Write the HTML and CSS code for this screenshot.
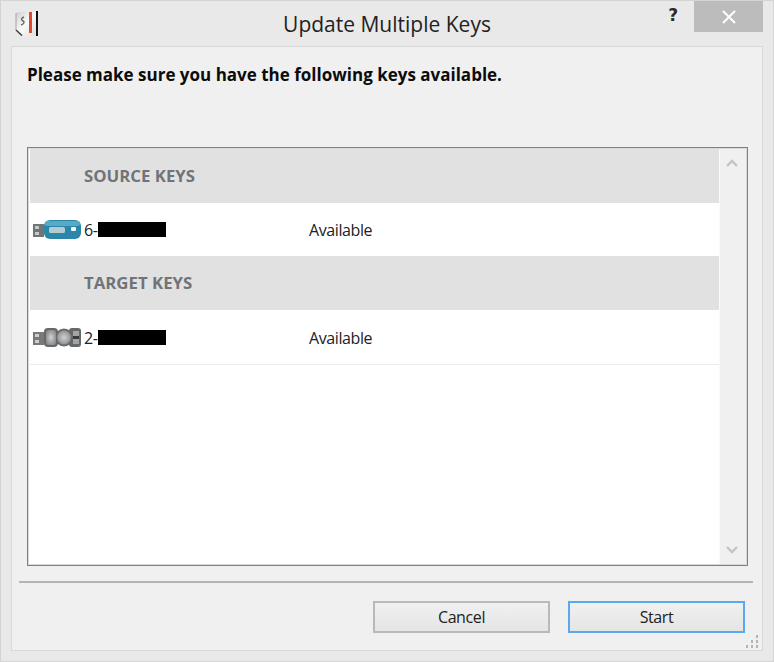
FILE: index.html
```html
<!DOCTYPE html>
<html lang="en">
<head>
  <meta charset="UTF-8">
  <title>Update Multiple Keys</title>
  <link rel="stylesheet" href="styles.css">
</head>
<body>

  <div class="window">
    <div class="titlebar">
      <svg class="app-icon" width="24" height="25" viewBox="0 0 24 25">
        <defs>
          <linearGradient id="page" x1="0" y1="0" x2="1" y2="1">
            <stop offset="0" stop-color="#cfcfcf"/>
            <stop offset="0.5" stop-color="#fafafa"/>
            <stop offset="1" stop-color="#dedede"/>
          </linearGradient>
        </defs>
        <path d="M1 2l2-1h18v24H7l-6-5z" fill="url(#page)"/>
        <path d="M1 19l6 5.500" stroke="#444" stroke-width="1.600" fill="none"/>
        <path d="M1 2v17" stroke="#a5a5a5" fill="none"/>
        <rect x="14" y="1" width="3" height="21" fill="#e2492a"/>
        <rect x="21" y="0" width="2" height="25" fill="#111"/>
        <path d="M9 6c-3 1-3 3-1 4s1 3-2 4" stroke="#666" stroke-width="1.400" fill="none"/>
      </svg>
      <h1 class="title">Update Multiple Keys</h1>
      <span class="help">?</span>
      <span class="close">
        <svg width="16" height="14" viewBox="0 0 16 14">
          <path d="M2 1l12 12M14 1L2 13" stroke="#fff" stroke-width="2" fill="none"/>
        </svg>
      </span>
    </div>

    <div class="client">
      <p class="notice">Please make sure you have the following keys available.</p>

      <div class="list">
        <div class="rows">
          <div class="section">SOURCE KEYS</div>
          <div class="row">
            <svg class="key-icon" width="48" height="20" viewBox="0 0 48 20">
              <rect x="0" y="4" width="11" height="13" fill="#6f7674"/>
              <rect x="2" y="6" width="4" height="3" fill="#c9c9c9"/>
              <rect x="2" y="12" width="4" height="3" fill="#c9c9c9"/>
              <rect x="11" y="0" width="37" height="19" rx="6" fill="#2a87a9"/>
              <rect x="12" y="1" width="35" height="5" rx="2.500" fill="#58a9c6"/>
              <rect x="16" y="7" width="16" height="6" rx="1.500" fill="#b3ccd4"/>
              <rect x="38" y="7" width="5" height="4" rx="1" fill="#f2f7f8"/>
            </svg>
            <span class="key-name">6-<i class="redact"></i></span>
            <span class="status">Available</span>
          </div>
          <div class="section">TARGET KEYS</div>
          <div class="row last">
            <svg class="key-icon" width="48" height="20" viewBox="0 0 48 20">
              <defs>
                <radialGradient id="lobe">
                  <stop offset="0" stop-color="#d0d2d3"/>
                  <stop offset="1" stop-color="#8f9192"/>
                </radialGradient>
              </defs>
              <rect x="0" y="4" width="11" height="13" fill="#77797a"/>
              <rect x="2" y="6" width="4" height="3" fill="#cfcfcf"/>
              <rect x="2" y="12" width="4" height="3" fill="#cfcfcf"/>
              <rect x="11" y="0" width="14" height="19" rx="4" fill="#66686a"/>
              <rect x="36" y="0" width="12" height="19" rx="3" fill="#66686a"/>
              <rect x="20" y="3" width="20" height="13" fill="#66686a"/>
              <circle cx="31" cy="9.500" r="9" fill="#66686a"/>
              <rect x="13" y="2" width="10" height="15" rx="3" fill="url(#lobe)"/>
              <circle cx="31" cy="9.500" r="7" fill="url(#lobe)"/>
              <rect x="40" y="3" width="6" height="13" fill="#a2a4a5"/>
              <rect x="40" y="8" width="6" height="3" fill="#3a3b3c"/>
            </svg>
            <span class="key-name">2-<i class="redact"></i></span>
            <span class="status">Available</span>
          </div>
        </div>
        <div class="scrollbar">
          <svg width="12" height="8" viewBox="0 0 12 8"><path d="M1 7l5-5 5 5" stroke="#c4c4c4" stroke-width="2.400" fill="none"/></svg>
          <svg width="12" height="8" viewBox="0 0 12 8"><path d="M1 1l5 5 5-5" stroke="#c4c4c4" stroke-width="2.400" fill="none"/></svg>
        </div>
      </div>

      <hr class="divider">

      <div class="buttons">
        <button class="btn" type="button">Cancel</button>
        <button class="btn default" type="button">Start</button>
      </div>

      <svg class="grip" width="12" height="13" viewBox="0 0 12 13" fill="#b5b5b5">
        <rect x="10" y="0" width="2" height="3"/>
        <rect x="5" y="5" width="2" height="3"/><rect x="10" y="5" width="2" height="3"/>
        <rect x="0" y="10" width="2" height="3"/><rect x="5" y="10" width="2" height="3"/><rect x="10" y="10" width="2" height="3"/>
      </svg>
    </div>
  </div>

</body>
</html>
```

FILE: styles.css
```css
* {
  box-sizing: border-box;
}
body {
  margin: 0;
  font-family: "Open Sans", sans-serif;
  color: #111;
}
.window {
  width: 774px;
  height: 662px;
  background: #e9e9e9;
  border: 1px solid #d4d4d4;
  padding: 0 10px 10px;
  display: flex;
  flex-direction: column;
}
.titlebar {
  height: 45px;
  display: flex;
  align-items: flex-start;
  position: relative;
}
.app-icon {
  margin: 10px 0 0 4px;
}
.title {
  position: absolute;
  left: 0;
  right: 0;
  top: 9px;
  margin: 0;
  text-align: center;
  font-size: 21px;
  line-height: 28px;
  font-weight: 400;
  color: #222;
}
.help {
  margin-left: auto;
  margin-right: 16px;
  margin-top: 2px;
  font-family: "DejaVu Sans", sans-serif;
  font-size: 17px;
  font-weight: 700;
  line-height: 24px;
  color: #2a2a2a;
}
.close {
  width: 69px;
  height: 31px;
  background: #bcbcbc;
  display: flex;
  align-items: center;
  justify-content: center;
}
.client {
  flex: 1;
  background: #f0f0f0;
  border: 1px solid #d8d8d8;
  padding: 0 9px 0 7px;
  position: relative;
  display: flex;
  flex-direction: column;
}
.notice {
  margin: 16px 0 0 8px;
  font-size: 17px;
  line-height: 24px;
  font-weight: 700;
  color: #0c0c0c;
  height: 84px;
  white-space: nowrap;
}
.list {
  margin-left: 8px;
  width: 721px;
  height: 419px;
  border: 1px solid #7d8288;
  box-shadow: inset 0 0 0 1px #d9d9d9;
  background: #fff;
  padding: 1px 1px 1px 2px;
  display: flex;
}
.rows {
  width: 689px;
}
.section {
  height: 54px;
  background: #e1e1e1;
  padding-left: 54px;
  font-size: 16.800px;
  font-weight: 700;
  line-height: 54px;
  color: #707478;
}
.row {
  height: 53px;
  display: flex;
  align-items: center;
  font-size: 16px;
  letter-spacing: -0.4px;
  color: #222;
}
.row.last {
  height: 55px;
  padding-top: 1px;
  border-bottom: 1px solid #ececec;
}
.key-icon {
  margin-left: 3px;
  flex: none;
}
.key-name {
  margin-left: 3px;
  width: 225px;
  display: flex;
  align-items: center;
}
.redact {
  display: block;
  width: 68px;
  height: 15px;
  background: #000;
}
.scrollbar {
  flex: 1;
  background: #f0f0f0;
  border-left: 1px solid #fafafa;
  display: flex;
  flex-direction: column;
  justify-content: space-between;
  align-items: center;
  padding: 10px 3px 10px 0;
}
.divider {
  margin: 15px 0 0;
  border: 0;
  height: 2px;
  background: #b4b4b4;
}
.buttons {
  margin-top: 18px;
  display: flex;
  justify-content: flex-end;
  gap: 18px;
  padding-right: 8px;
}
.btn {
  width: 177px;
  height: 32px;
  background: linear-gradient(#f0f0f0, #e5e5e5);
  border: 2px solid #b9b9b9;
  font-family: "Open Sans", sans-serif;
  font-size: 16px;
  letter-spacing: -0.4px;
  color: #222;
  padding: 0;
}
.btn.default {
  border-color: #5aa8f0;
}
.grip {
  position: absolute;
  right: 4px;
  bottom: 2px;
}
```
